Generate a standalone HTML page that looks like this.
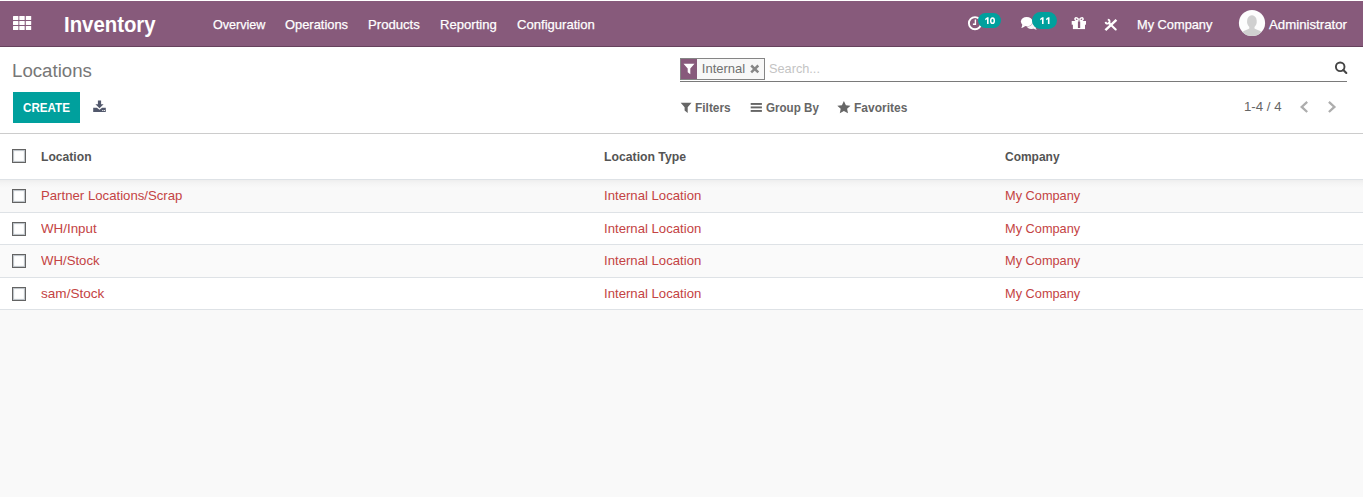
<!DOCTYPE html>
<html>
<head>
<meta charset="utf-8">
<title>Odoo - Locations</title>
<style>
*{box-sizing:border-box;margin:0;padding:0}
html,body{width:1367px;height:497px;overflow:hidden;background:#fff}
body{font-family:"Liberation Sans",sans-serif;font-size:13px;color:#4c4c4c;position:relative}
.abs{position:absolute;white-space:nowrap;line-height:1}
#app{position:absolute;left:0;top:1px;width:1363px;height:496px;background:#f9f9f9;overflow:hidden}
#nav{position:absolute;left:0;top:0;width:1363px;height:46px;background:#875a7b;border-bottom:1px solid #66425d}
.t{color:#fff;-webkit-text-stroke:.25px #fff}
#brand,#t10,#t11{-webkit-text-stroke:0}
#cp{position:absolute;left:0;top:46px;width:1363px;height:87px;background:#fff;border-bottom:1px solid #cccccc}
#tbl{position:absolute;left:0;top:133px;width:1363px;height:176px;background:#fff}
.row{position:absolute;left:0;width:1363px;border-bottom:1px solid #dee2e6}
.cb{position:absolute;left:12px;width:14px;height:14px;border:1px solid #636363;background:#fff;border-radius:0;box-shadow:inset 0 0 1px 1px rgba(140,150,160,.6)}
.red{color:#c44343}
.hd{font-weight:bold;color:#545454}
/*FIT*/
#brand{left:63.9px;top:12.7px;font-size:22.4px;transform-origin:0 0;transform:scale(0.909,1)}
#m1{left:212.63px;top:17px;font-size:13.5px;transform-origin:0 0;transform:scale(0.93,1)}
#m2{left:285px;top:17px;font-size:13.5px;transform-origin:0 0;transform:scale(0.955,1)}
#m3{left:368.22px;top:17px;font-size:13.5px;transform-origin:0 0;transform:scale(0.973,1)}
#m4{left:440.02px;top:17px;font-size:13.5px;transform-origin:0 0;transform:scale(0.969,1)}
#m5{left:516.77px;top:17px;font-size:13.5px;transform-origin:0 0;transform:scale(0.969,1)}
#co{left:1136.92px;top:17px;font-size:13.5px;transform-origin:0 0;transform:scale(0.948,1)}
#ad{left:1269.03px;top:17px;font-size:13.5px;transform-origin:0 0;transform:scale(0.981,1)}
#title{left:12.44px;top:15px;font-size:18px;transform-origin:0 0;transform:scale(1.037,1)}
#internal{left:701.82px;top:14.5px;font-size:13px;transform-origin:0 0;transform:scale(1,1)}
#search{left:768.56px;top:14.5px;font-size:13px;transform-origin:0 0;transform:scale(0.979,1)}
#f1{left:695.17px;top:54px;font-size:13px;transform-origin:0 0;transform:scale(0.916,1)}
#f2{left:765.77px;top:54px;font-size:13px;transform-origin:0 0;transform:scale(0.892,1)}
#f3{left:854.27px;top:54px;font-size:13px;transform-origin:0 0;transform:scale(0.923,1)}
#pager{left:1244.03px;top:53px;font-size:13px;transform-origin:0 0;transform:scale(1.02,1)}
#h1{left:40.92px;top:16px;font-size:13px;transform-origin:0 0;transform:scale(0.933,1)}
#h2{left:603.72px;top:16px;font-size:13px;transform-origin:0 0;transform:scale(0.941,1)}
#h3{left:1004.84px;top:16px;font-size:13px;transform-origin:0 0;transform:scale(0.921,1)}
#r1a{left:41.16px;top:9px;font-size:13px;transform-origin:0 0;transform:scale(1.014,1)}
#r1b{left:603.65px;top:9px;font-size:13px;transform-origin:0 0;transform:scale(1.012,1)}
#r1c{left:1005.27px;top:9px;font-size:13px;transform-origin:0 0;transform:scale(0.982,1)}
#r2a{left:41.44px;top:9px;font-size:13px;transform-origin:0 0;transform:scale(1.026,1)}
#r3a{left:41.45px;top:9px;font-size:13px;transform-origin:0 0;transform:scale(1.015,1)}
#r4a{left:40.86px;top:9px;font-size:13px;transform-origin:0 0;transform:scale(1.044,1)}
#r2b{left:603.64px;top:9px;font-size:13px;transform-origin:0 0;transform:scale(1.012,1)}
#r2c{left:1005.27px;top:9px;font-size:13px;transform-origin:0 0;transform:scale(0.982,1)}
#r3b{left:603.65px;top:9px;font-size:13px;transform-origin:0 0;transform:scale(1.012,1)}
#r3c{left:1005.27px;top:9px;font-size:13px;transform-origin:0 0;transform:scale(0.982,1)}
#r4b{left:603.64px;top:9px;font-size:13px;transform-origin:0 0;transform:scale(1.012,1)}
#r4c{left:1005.27px;top:9px;font-size:13px;transform-origin:0 0;transform:scale(0.982,1)}
#createt{left:23.19px;top:55px;font-size:12.2px;transform-origin:0 0;transform:scale(0.954,1)}
/*ENDFIT*/
</style>
</head>
<body>
<div id="app">
  <div id="nav">
    <svg class="abs" style="left:12.900px;top:15px" width="19" height="15" viewBox="0 0 19 15"><g fill="#fff"><rect x="0" y="0" width="5.400" height="4" rx=".5"/><rect x="6.3" y="0" width="5.400" height="4" rx=".5"/><rect x="12.8" y="0" width="5.400" height="4" rx=".5"/><rect x="0" y="5" width="5.400" height="4" rx=".5"/><rect x="6.3" y="5" width="5.400" height="4" rx=".5"/><rect x="12.8" y="5" width="5.400" height="4" rx=".5"/><rect x="0" y="10" width="5.400" height="4" rx=".5"/><rect x="6.3" y="10" width="5.400" height="4" rx=".5"/><rect x="12.8" y="10" width="5.400" height="4" rx=".5"/></g></svg>
    <span id="brand" class="abs t" style="font-weight:bold">Inventory</span>
    <span id="m1" class="abs t">Overview</span>
    <span id="m2" class="abs t">Operations</span>
    <span id="m3" class="abs t">Products</span>
    <span id="m4" class="abs t">Reporting</span>
    <span id="m5" class="abs t">Configuration</span>

    <!-- clock -->
    <svg id="clock" class="abs" style="left:967px;top:14px" width="16" height="16" viewBox="0 0 16 16"><circle cx="8" cy="8.2" r="6.1" fill="none" stroke="#fff" stroke-width="1.9"/><path d="M8.4 4.6v4.6H5.9" fill="none" stroke="#fff" stroke-width="1.4"/></svg>
    <div id="b10" class="abs" style="left:978px;top:12px;width:23px;height:15px;border-radius:7.5px;background:#00a09d"></div>
    <svg id="t10" class="abs" style="left:984px;top:16px" width="12" height="8" viewBox="0 0 12 8"><path d="M1.200 1.800L3.200.300H4.600V7.000H3.000V2.200L1.200 3.300z" fill="#fff"/><ellipse cx="8.500" cy="3.650" rx="1.800" ry="2.650" fill="none" stroke="#fff" stroke-width="1.500"/></svg>
    <!-- comments -->
    <svg id="comm" class="abs" style="left:1020px;top:15px" width="18" height="15" viewBox="0 0 18 15"><g fill="#fff"><ellipse cx="11.400" cy="9.500" rx="4.900" ry="3.400" opacity=".95"/><path d="M13.300 12.000c.9 1.000 2.000 1.600 3.500 1.800-.8-.9-1.200-1.800-1.300-2.800z" opacity=".95"/><ellipse cx="6.700" cy="5.600" rx="6.300" ry="5.200" fill="#875a7b" opacity=".55"/><ellipse cx="6.700" cy="5.600" rx="5.800" ry="4.700"/><path d="M2.300 8.400c-.1 1.300-.4 2.400-1.000 3.500 1.500-.2 2.800-.9 3.800-1.900z"/></g></svg>
    <div id="b11" class="abs" style="left:1032px;top:11px;width:25px;height:17px;border-radius:8.5px;background:#00a09d"></div>
    <svg id="t11" class="abs" style="left:1038.600px;top:16px" width="12" height="8" viewBox="0 0 12 8"><path d="M1.200 1.800L3.200.300H4.600V7.000H3.000V2.200L1.200 3.300z" fill="#fff"/><path d="M1.200 1.800L3.200.300H4.600V7.000H3.000V2.200L1.200 3.300z" fill="#fff" transform="translate(5.900 0)"/></svg>
    <!-- gift -->
    <svg id="gift" class="abs" style="left:1071px;top:15px" width="16" height="14" viewBox="0 0 16 14"><g fill="#fff"><path d="M.7 5.000h14.300v3.700H.7z"/><path d="M1.900 8.000h12.100v5.100H1.900z"/></g><path d="M6.900 5.300h2.300v6.700H6.900z" fill="#875a7b"/><g fill="none" stroke="#fff" stroke-width="1.500"><ellipse cx="5.600" cy="3.200" rx="1.700" ry="1.300" transform="rotate(30 5.600 3.200)"/><ellipse cx="10.500" cy="3.200" rx="1.700" ry="1.300" transform="rotate(-30 10.500 3.200)"/></g></svg>
    <!-- tools -->
    <svg id="tools" class="abs" style="left:1104px;top:17px" width="14" height="14" viewBox="0 0 14 14"><g stroke="#fff" fill="none"><path d="M2.300 11.300L11.500 2.700" stroke-width="2.500" stroke-linecap="square"/><path d="M5.000 5.100L11.700 11.500" stroke-width="2.100" stroke-linecap="round"/><path d="M3.770 1.710A2.000 2.000 0 1 1 1.610 3.870" stroke-width="1.800"/></g></svg>
    <!-- avatar -->
    <svg id="avatar" class="abs" style="left:1238px;top:8px" width="28" height="28" viewBox="0 0 28 28"><defs><clipPath id="avc"><circle cx="14" cy="14" r="13.100"/></clipPath></defs><circle cx="14" cy="14" r="13.100" fill="#fdfdfd"/><g clip-path="url(#avc)" fill="#d0d0d0"><rect x="9.100" y="6.300" width="9.600" height="12.300" rx="4.600" ry="5.400"/><path d="M11.300 17.000h5.200v2.400c1.600 1.000 5.000 1.600 6.700 3.400l1.300 5.200H3.500l1.300-5.200c1.700-1.800 5.100-2.400 6.500-3.400z"/></g></svg>
    <span id="co" class="abs t">My Company</span>
    <span id="ad" class="abs t">Administrator</span>
  </div>
  <div id="cp">
    <span id="title" class="abs" style="color:#777">Locations</span>
    <div id="create" class="abs" style="left:13px;top:45px;width:67px;height:31px;background:#00a09d"></div>
    <span id="createt" class="abs" style="color:#fff;font-weight:bold">CREATE</span>
    <div id="facet" class="abs" style="left:680px;top:11px;width:85px;height:22px;border:1px solid #858585;background:#f8f8f8"></div>
    <span id="internal" class="abs" style="color:#707070">Internal</span>
    <span id="search" class="abs" style="color:#c4c4c4">Search...</span>
    <div class="abs" style="left:680px;top:34px;width:667px;height:1px;background:#7a7a7a"></div>

    <!-- download -->
    <svg id="dl" class="abs" style="left:93px;top:53px" width="13" height="13" viewBox="0 0 13 13"><g fill="#52586c"><path d="M4.900.4h3.200v3.900h2.500L6.500 8.300 2.400 4.300h2.500z"/><path d="M.2 7.800h3.700l2.600 2.000 2.600-2.000h3.700v4.100H.2z"/></g><rect x="9.300" y="10.000" width="1.000" height="1.000" fill="#fff"/><rect x="10.900" y="10.000" width="1.000" height="1.000" fill="#fff"/></svg>
    <!-- facet funnel -->
    <div id="fpurple" class="abs" style="left:681px;top:12px;width:16px;height:20px;background:#875a7b"></div>
    <svg id="ffun" class="abs" style="left:683px;top:16px" width="12" height="12" viewBox="0 0 12 12"><path d="M.5.800h11L7.300 5.600v5.600L4.700 9.200V5.600z" fill="#fff"/></svg>
    <!-- facet remove -->
    <svg id="fx" class="abs" style="left:750px;top:17px" width="10" height="10" viewBox="0 0 10 10"><path d="M1.200 1.500L8.300 8.300M8.300 1.500L1.200 8.300" stroke="#878787" stroke-width="2.500" fill="none"/></svg>
    <!-- search -->
    <svg id="sicon" class="abs" style="left:1334px;top:14px" width="14" height="14" viewBox="0 0 14 14"><circle cx="6.200" cy="5.800" r="4.300" fill="none" stroke="#454545" stroke-width="1.900"/><path d="M9.300 9.000L12.300 12.000" stroke="#454545" stroke-width="2.100" stroke-linecap="round"/></svg>
    <!-- filters funnel -->
    <svg id="ifun" class="abs" style="left:680px;top:55px" width="12" height="12" viewBox="0 0 12 12"><path d="M.7.700h10.800L7.700 5.300v5.600L4.600 8.600V5.300z" fill="#666"/></svg>
    <!-- bars -->
    <svg id="ibars" class="abs" style="left:750px;top:55px" width="13" height="11" viewBox="0 0 13 11"><g fill="#666"><rect x=".7" y="1.000" width="11.200" height="1.900"/><rect x=".7" y="4.450" width="11.200" height="1.900"/><rect x=".7" y="8.000" width="11.200" height="1.900"/></g></svg>
    <!-- star -->
    <svg id="istar" class="abs" style="left:837px;top:54px" width="14" height="13" viewBox="0 0 14 13"><path d="M6.900 0l2.000 4.200 4.600.500-3.400 3.100.9 4.500-4.100-2.300-4.100 2.300.9-4.500L.3 4.700l4.600-.5z" fill="#666"/></svg>
    <!-- chevrons -->
    <svg id="chl" class="abs" style="left:1299px;top:53px" width="10" height="14" viewBox="0 0 10 14"><path d="M8.200 1.800L2.700 6.900l5.500 5.100" fill="none" stroke="#adadad" stroke-width="2.300"/></svg>
    <svg id="chr" class="abs" style="left:1327px;top:53px" width="10" height="14" viewBox="0 0 10 14"><path d="M1.900 1.800L7.400 6.900l-5.500 5.100" fill="none" stroke="#adadad" stroke-width="2.300"/></svg>
    <span id="f1" class="abs hd" style="color:#666">Filters</span>
    <span id="f2" class="abs hd" style="color:#666">Group By</span>
    <span id="f3" class="abs hd" style="color:#666">Favorites</span>
    <span id="pager" class="abs" style="color:#666">1-4 / 4</span>
  </div>
  <div id="tbl">
    <div class="row" style="top:0;height:46px;background:#fff">
      <div class="cb" style="top:15px"></div>
      <span id="h1" class="abs hd">Location</span>
      <span id="h2" class="abs hd">Location Type</span>
      <span id="h3" class="abs hd">Company</span>
    </div>
    <div class="row" style="top:46px;height:33px;background:linear-gradient(#eeeeee,#f4f4f4 3px,#f9f9f9 8px)">
      <div class="cb" style="top:9px"></div>
      <span id="r1a" class="abs red">Partner Locations/Scrap</span>
      <span id="r1b" class="abs red">Internal Location</span>
      <span id="r1c" class="abs red">My Company</span>
    </div>
    <div class="row" style="top:79px;height:32px;background:#fff">
      <div class="cb" style="top:9px"></div>
      <span id="r2a" class="abs red">WH/Input</span>
      <span id="r2b" class="abs red">Internal Location</span>
      <span id="r2c" class="abs red">My Company</span>
    </div>
    <div class="row" style="top:111px;height:33px;background:#fafafa">
      <div class="cb" style="top:9px"></div>
      <span id="r3a" class="abs red">WH/Stock</span>
      <span id="r3b" class="abs red">Internal Location</span>
      <span id="r3c" class="abs red">My Company</span>
    </div>
    <div class="row" style="top:144px;height:32px;background:#fff">
      <div class="cb" style="top:9px"></div>
      <span id="r4a" class="abs red">sam/Stock</span>
      <span id="r4b" class="abs red">Internal Location</span>
      <span id="r4c" class="abs red">My Company</span>
    </div>
  </div>
</div>
</body>
</html>
